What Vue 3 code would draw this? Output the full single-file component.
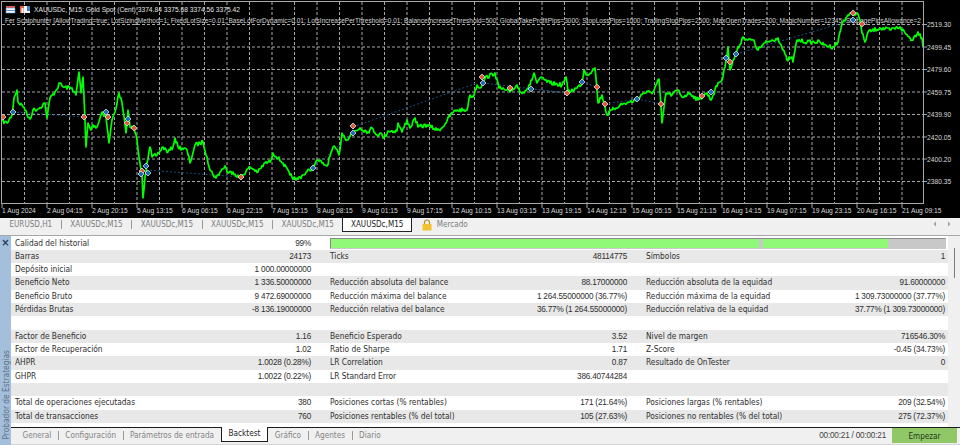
<script setup>
// price line keypoints, read off the chart in page pixels: x, y, x, y ...
const keyPoints = [
  2,121, 7,123, 12,115, 14,98, 17,90, 18,102, 24,107, 27,115, 30,119, 33,110, 38,109, 45,103, 47,118, 50,98, 55,92, 60,83, 63,87, 72,88, 76,95, 79,72, 81,93, 83,77, 84,97, 85,120, 86,147, 88,123, 91,130, 93,125, 97,127, 102,112, 106,117, 109,143, 112,120, 115,112, 119,93, 122,103, 126,133, 128,110, 130,127, 134,128, 137,140, 140,163, 142,175, 143,198, 145,177, 147,163, 150,147, 152,157, 157,155, 163,147, 168,152, 173,147, 175,138, 178,147, 187,150, 190,163, 195,145, 203,142, 207,157, 210,170, 216,178, 220,172, 225,166, 228,173, 233,172, 240,178,
  250,167, 258,172, 265,163, 270,162, 273,153, 278,158, 283,163, 290,175, 296,180, 303,175, 312,168, 318,160, 322,163, 327,166, 332,150, 335,147, 339,155, 342,133, 347,140, 353,132, 360,128, 368,132, 372,128, 377,135, 380,133, 384,138, 388,131, 397,131, 398,123, 402,132, 407,120, 410,128, 415,118, 418,127, 427,125, 437,130, 442,128, 452,113, 457,110, 467,110, 470,95, 473,97, 477,85, 480,88,
  485,78, 495,73, 499,88, 505,90, 510,92, 517,85, 520,92, 525,91, 530,85, 534,73, 537,83, 540,78, 550,83, 562,85, 566,77, 568,92, 577,88, 582,83, 584,70, 587,75, 595,68, 597,90, 598,103, 602,95, 607,115, 612,110, 620,105, 630,102, 637,100, 643,93, 653,92, 659,79, 662,123, 666,93, 672,95, 678,90, 682,97, 690,93, 698,100, 707,93, 711,100, 718,83,
  722,80, 725,67, 728,47, 730,70, 736,53, 743,37, 748,40, 753,40, 758,50, 765,43, 778,38, 783,50, 787,60, 792,57, 793,62, 797,40, 807,42, 820,42, 824,45, 833,47, 838,42, 842,23, 848,15, 857,13, 860,20, 862,33, 865,42, 868,32, 880,28, 890,30, 900,27, 905,33, 912,40, 918,32, 922,38, 923,47
]

// fill in between the keypoints with a little repeatable noise
function buildPriceLine() {
  let seed = 7
  const noise = () => {
    seed = (seed * 16807) % 2147483647
    return (seed / 2147483647 - 0.5) * 4
  }
  const out = []
  for (let i = 0; i < keyPoints.length - 2; i += 2) {
    const x0 = keyPoints[i], y0 = keyPoints[i + 1]
    const x1 = keyPoints[i + 2], y1 = keyPoints[i + 3]
    out.push(`${x0},${y0}`)
    for (let x = x0 + 1; x < x1; x++) {
      const y = y0 + ((y1 - y0) * (x - x0)) / (x1 - x0)
      out.push(`${x},${(y + noise()).toFixed(1)}`)
    }
  }
  out.push('923,47')
  return out.join(' ')
}
const priceLine = buildPriceLine()

const gridX = Array.from({ length: 40 }, (_, i) => 24.5 + i * 22.5)
const gridY = [24.5, 47, 69.5, 92, 114.5, 137, 159, 181.5]
const prices = ['2519.30', '2499.45', '2479.60', '2459.75', '2439.90', '2420.05', '2400.20', '2380.35']
const times = ['1 Aug 2024', '2 Aug 04:15', '2 Aug 20:15', '5 Aug 13:15', '6 Aug 06:15', '6 Aug 22:15', '7 Aug 15:15', '8 Aug 08:15', '9 Aug 01:15', '9 Aug 17:15', '12 Aug 10:15', '13 Aug 03:15', '13 Aug 19:15', '14 Aug 12:15', '15 Aug 05:15', '15 Aug 21:15', '16 Aug 14:15', '19 Aug 07:15', '19 Aug 23:15', '20 Aug 16:15', '21 Aug 09:15']

const tradeLines = [
  [13, 112, 84, 117], [146, 170, 241, 177], [313, 168, 353, 133],
  [353, 127, 477, 83], [483, 83, 567, 93], [531, 89, 567, 93],
  [582, 82, 597, 87], [605, 104, 637, 99], [637, 99, 661, 104],
  [736, 54, 853, 20]
]
const sellMarks = [[3, 117], [84, 117], [108, 117], [127, 123], [134, 128], [142, 171], [241, 177], [353, 126], [482, 77], [510, 88], [567, 93], [597, 87], [605, 104], [661, 104], [702, 96], [730, 62], [853, 13], [862, 24]]
const buyMarks = [[13, 112], [106, 112], [128, 119], [146, 166], [141, 174], [148, 173], [313, 168], [353, 133], [483, 83], [531, 89], [582, 82], [637, 99], [711, 92], [726, 58], [736, 54], [853, 20]]

const diamond = ([x, y]) => `${x},${y - 3} ${x + 3},${y} ${x},${y + 3} ${x - 3},${y}`

const chartTabs = ['EURUSD,H1', 'XAUUSDc,M15', 'XAUUSDc,M15', 'XAUUSDc,M15', 'XAUUSDc,M15']

const rows = [
  ['Calidad del historial', '99%', null],
  ['Barras', '24173', 'Ticks', '48114775', 'Símbolos', '1'],
  ['Depósito inicial', '1 000.00000000', '', '', '', ''],
  ['Beneficio Neto', '1 336.50000000', 'Reducción absoluta del balance', '88.17000000', 'Reducción absoluta de la equidad', '91.60000000'],
  ['Beneficio Bruto', '9 472.69000000', 'Reducción máxima del balance', '1 264.55000000 (36.77%)', 'Reducción máxima de la equidad', '1 309.73000000 (37.77%)'],
  ['Pérdidas Brutas', '-8 136.19000000', 'Reducción relativa del balance', '36.77% (1 264.55000000)', 'Reducción relativa de la equidad', '37.77% (1 309.73000000)'],
  ['', '', '', '', '', ''],
  ['Factor de Beneficio', '1.16', 'Beneficio Esperado', '3.52', 'Nivel de margen', '716546.30%'],
  ['Factor de Recuperación', '1.02', 'Ratio de Sharpe', '1.71', 'Z-Score', '-0.45 (34.73%)'],
  ['AHPR', '1.0028 (0.28%)', 'LR Correlation', '0.87', 'Resultado de OnTester', '0'],
  ['GHPR', '1.0022 (0.22%)', 'LR Standard Error', '386.40744284', '', ''],
  ['', '', '', '', '', ''],
  ['Total de operaciones ejecutadas', '380', 'Posiciones cortas (% rentables)', '171 (21.64%)', 'Posiciones largas (% rentables)', '209 (32.54%)'],
  ['Total de transacciones', '760', 'Posiciones rentables (% del total)', '105 (27.63%)', 'Posiciones no rentables (% del total)', '275 (72.37%)']
]

const bottomTabsLeft = ['General', 'Configuración', 'Parámetros de entrada']
const bottomTabsRight = ['Gráfico', 'Agentes', 'Diario']
</script>

<template>
  <div class="terminal">
    <svg class="chart" width="960" height="218" viewBox="0 0 960 218">
      <rect x="1.5" y="1.5" width="922" height="202" fill="#000" stroke="#a8a8a8" />

      <line v-for="x in gridX" :key="'v' + x" :x1="x" y1="2" :x2="x" y2="203" stroke="#a8a8a8" stroke-dasharray="3 2" />
      <line v-for="y in gridY" :key="'h' + y" x1="2" :y1="y" x2="923" :y2="y" stroke="#a8a8a8" stroke-dasharray="3 2" />

      <!-- header icons -->
      <rect x="6" y="6" width="9" height="2" fill="#e0584a" />
      <rect x="6" y="8" width="9" height="5" fill="#fff" stroke="#5a8fd0" stroke-width="0.6" />
      <line x1="6" y1="10.5" x2="15" y2="10.5" stroke="#5a8fd0" />
      <rect x="20" y="6" width="4" height="7" fill="#e0584a" />
      <rect x="24" y="6" width="6" height="7" fill="#f4f4f4" />
      <rect x="27" y="6" width="3" height="5" fill="#3d7fc8" />
      <rect x="21.5" y="8" width="2" height="5" fill="#fff" />

      <text x="34" y="11.5" class="head">XAUUSDc, M15:  Gold Spot (Cent)  3374.84 3375.68 3374.56 3375.42</text>

      <clipPath id="plot"><rect x="2" y="2" width="921" height="201" /></clipPath>
      <g clip-path="url(#plot)">
        <text x="5" y="22.5" class="params">Fer Scalphunter [AllowTrading=true; LotSizingMethod=1; FixedLotSize=0.01; BaseLotForDynamic=0.01; LotsIncreasePerThreshold=0.01; BalanceIncreaseThreshold=500; GlobalTakeProfitPips=3000; StopLossPips=1000; TrailingStopPips=2500; MaxOpenTrades=200; MagicNumber=12345; SlippagePipsAllowance=2</text>
        <line v-for="(l, i) in tradeLines" :key="'t' + i" :x1="l[0]" :y1="l[1]" :x2="l[2]" :y2="l[3]" class="trade" />
        <polyline :points="priceLine" class="price" />
        <polygon v-for="(m, i) in sellMarks" :key="'s' + i" :points="diamond(m)" class="mark sell" />
        <polygon v-for="(m, i) in buyMarks" :key="'b' + i" :points="diamond(m)" class="mark buy" />
      </g>

      <g v-for="(p, i) in prices" :key="p">
        <line x1="923" :y1="gridY[i]" x2="927" :y2="gridY[i]" stroke="#a8a8a8" />
        <text x="927" :y="gridY[i] + 2.5" class="axis">{{ p }}</text>
      </g>
      <g v-for="(t, i) in times" :key="t">
        <line :x1="2 + i * 45" y1="203" :x2="2 + i * 45" y2="208" stroke="#a8a8a8" />
        <text :x="2 + i * 45" y="213" class="axis">{{ t }}</text>
      </g>
    </svg>

    <div class="chart-tabs">
      <span v-for="(tab, i) in chartTabs" :key="i" class="chart-tab">{{ tab }}</span>
      <span class="chart-tab active">XAUUSDc,M15</span>
      <svg class="lock" width="10" height="12" viewBox="0 0 10 12">
        <path d="M2.5 5V3.5a2.5 2.5 0 0 1 5 0V5" fill="none" stroke="#b89020" stroke-width="1.2" />
        <rect x="0.5" y="5" width="9" height="6.5" rx="0.5" fill="#f2c230" />
      </svg>
      <span class="market">Mercado</span>
      <span class="arrows">
        <svg width="4" height="6" viewBox="0 0 4 6"><path d="M3 0.5 0.5 3 3 5.5z" fill="#a0a0a0" /></svg>
        <svg width="4" height="6" viewBox="0 0 4 6"><path d="M1 0.5 3.5 3 1 5.5z" fill="#a0a0a0" /></svg>
      </span>
    </div>

    <div class="tester">
      <aside class="side">
        <span class="close">×</span>
        <span class="side-title">Probador de Estrategias</span>
      </aside>

      <div class="main">
        <div class="report">
          <div class="table">
            <div v-for="(row, i) in rows" :key="i" class="row" :class="{ even: i % 2 === 1 }">
              <span class="label">{{ row[0] }}</span>
              <span class="value">{{ row[1] }}</span>
              <div v-if="row[2] === null" class="quality">
                <div class="quality-good"></div>
                <div class="quality-gap"></div>
                <div class="quality-good short"></div>
              </div>
              <template v-else>
                <span class="label indented">{{ row[2] }}</span>
                <span class="value">{{ row[3] }}</span>
                <span class="label indented">{{ row[4] }}</span>
                <span class="value">{{ row[5] }}</span>
              </template>
            </div>
          </div>
          <div class="scroll"><div class="thumb"></div></div>
        </div>

        <div class="bottom-bar">
          <span v-for="(tab, i) in bottomTabsLeft" :key="tab" class="bottom-tab" :class="{ last: i === 2 }">{{ tab }}</span>
          <span class="bottom-tab active">Backtest</span>
          <span v-for="(tab, i) in bottomTabsRight" :key="tab" class="bottom-tab" :class="{ last: i === 2 }">{{ tab }}</span>
          <span class="timer">00:00:21 / 00:00:21</span>
          <button class="start">Empezar</button>
        </div>
      </div>
    </div>
  </div>
</template>

<style>
html, body { margin: 0; background: #f0f0f0; }
</style>

<style scoped>
.terminal {
  width: 960px;
  height: 445px;
  overflow: hidden;
  display: flex;
  flex-direction: column;
  background: #f0f0f0;
  font-family: "DejaVu Sans Condensed", "DejaVu Sans", sans-serif;
  font-stretch: condensed;
  font-size: 8.3px;
  color: #2e2e2e;
}

/* chart */
.chart { display: block; background: #000; flex-shrink: 0; font-family: "Liberation Sans", Arial, sans-serif; font-stretch: normal; }
.head { font-size: 6.7px; fill: #e4e4e4; white-space: pre; }
.params { font-size: 6.53px; fill: #d4d4d4; }
.axis { font-size: 6.7px; fill: #d8d8d8; }
.trade { stroke: #1d4d78; stroke-width: 1; stroke-dasharray: 2 2; }
.price { fill: none; stroke: #00ff00; stroke-width: 1.7; stroke-linejoin: round; }
.mark { stroke: #e0e0e0; stroke-width: 0.8; }
.sell { fill: #dc5a3a; }
.buy { fill: #1a6cb0; }

/* chart tabs */
.chart-tabs {
  height: 18px;
  flex-shrink: 0;
  display: flex;
  align-items: flex-start;
  padding-left: 1px;
  box-sizing: border-box;
  border-bottom: 1px solid #a8a8a8;
  font-size: 8.05px;
}
.chart-tab {
  height: 9px;
  line-height: 9px;
  margin-top: 2px;
  padding: 0 8.5px;
  color: #7c7c7c;
  border-right: 1px solid #9a9a9a;
}
.chart-tab:nth-child(5) { border-right: none; }
.chart-tab.active {
  height: 13px;
  line-height: 13px;
  margin: 0;
  padding: 0 7.5px;
  background: #fff;
  color: #1c1c1c;
  border: 1px solid #222;
  border-top: none;
}
.lock { margin: 1px 0 0 10px; }
.market { margin: 2px 0 0 5px; line-height: 9px; color: #7c7c7c; }
.arrows { margin: 3px 0 0 auto; padding-right: 9px; display: flex; gap: 10px; }

/* tester panel */
.tester { flex: 1; min-height: 0; display: flex; }
.side {
  width: 11px;
  flex-shrink: 0;
  background: #a3bfdc;
  display: flex;
  flex-direction: column;
  justify-content: space-between;
  align-items: center;
}
.close { font-size: 11px; line-height: 13px; font-weight: bold; color: #223a5c; }
.side-title {
  writing-mode: vertical-rl;
  transform: rotate(180deg);
  color: #5c6f84;
  margin-bottom: 5px;
}
.main { flex: 1; min-width: 0; display: flex; flex-direction: column; }
.report { flex: 1; min-height: 0; display: flex; background: #fff; }
.table { width: 937px; padding-top: 0.5px; }
.row {
  height: 13.33px;
  line-height: 13.33px;
  display: grid;
  grid-template-columns: 200px 96px 179px 137px 189px 129px;
  padding: 0 3px 0 4px;
  box-sizing: border-box;
  white-space: nowrap;
}
.row.even { background: #e8e8e8; }
.value {
  text-align: right;
  font-family: "Liberation Sans", Arial, sans-serif;
  font-stretch: normal;
  font-size: 8.2px;
  letter-spacing: -0.2px;
}
.indented { margin-left: 19px; }
.quality {
  grid-column: 3 / 7;
  margin: 1px -1px 1px 19px;
  display: flex;
  background: #c8c8c8;
  border: 1px solid #8a8a8a;
  border-right-color: #c8c8c8;
  border-bottom-color: #c8c8c8;
}
.quality-good { width: 428px; background: #90fa78; }
.quality-gap { width: 4px; }
.quality-good.short { width: 125px; }
.scroll { flex: 1; background: #f0f0f0; display: flex; justify-content: center; }
.thumb { width: 1px; height: 30px; margin-top: 12px; background: #7c7c7c; }

.bottom-bar {
  height: 18px;
  flex-shrink: 0;
  box-sizing: border-box;
  border-top: 1px solid #1c1c1c;
  border-bottom: 1px solid #d4d4d4;
  display: flex;
  align-items: flex-start;
  padding-left: 5px;
  font-size: 8.15px;
}
.bottom-tab {
  height: 9px;
  line-height: 9px;
  margin-top: 3px;
  padding: 0 6.5px;
  color: #828282;
  border-right: 1px solid #9a9a9a;
}
.bottom-tab.last { border-right: none; }
.bottom-tab.active {
  height: 14px;
  line-height: 13px;
  margin: -1px 0 0;
  padding: 0 7px;
  background: #fff;
  color: #1c1c1c;
  border: 1px solid #1c1c1c;
  border-top: none;
}
.timer {
  margin: 3px 6px 0 auto;
  line-height: 9px;
  color: #444;
  font-family: "Liberation Sans", Arial, sans-serif;
  font-stretch: normal;
  font-size: 8.2px;
  letter-spacing: -0.2px;
}
.start {
  width: 65px;
  height: 15px;
  margin: 0 3px 0 0;
  padding: 0;
  border: none;
  background: #90c868;
  font: inherit;
  color: #243818;
}
</style>
